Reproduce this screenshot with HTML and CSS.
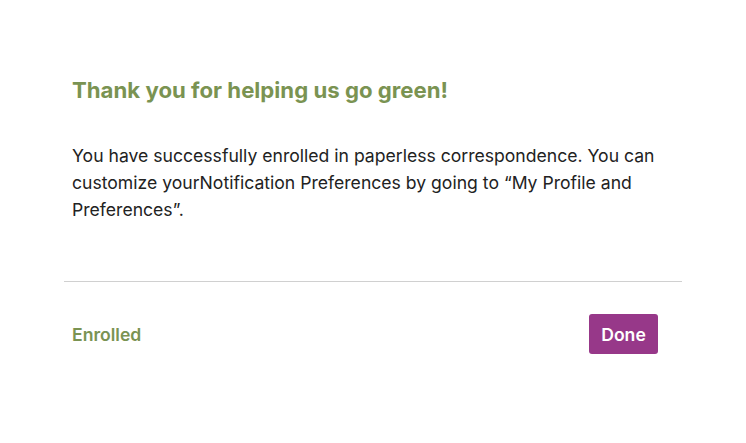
FILE: index.html
```html
<!DOCTYPE html>
<html lang="en">
<head>
<meta charset="utf-8">
<title>Paperless enrollment</title>
<link rel="stylesheet" href="styles.css">
</head>
<body>
<div class="modal">
  <div class="modal-body">
    <h2 class="title">Thank you for helping us go green!</h2>
    <p class="message">You have successfully enrolled in paperless correspondence. You can customize yourNotification Preferences by going to “My Profile and Preferences”.</p>
  </div>
  <div class="modal-footer">
    <span class="status">Enrolled</span>
    <button class="btn-done" type="button">Done</button>
  </div>
</div>
</body>
</html>
```

FILE: styles.css
```css
html, body {
  margin: 0;
  padding: 0;
  background: #ffffff;
}
body {
  font-family: "Inter", "Liberation Sans", sans-serif;
  color: #222222;
}
.modal {
  width: 618px;
  margin-left: 64px;
  padding-top: 76px;
}
.modal-body {
  padding: 0 8px;
  border-bottom: 1px solid #d0d0d0;
  padding-bottom: 58px;
}
.title {
  margin: 0;
  font-size: 22.2px;
  line-height: 28px;
  font-weight: 700;
  color: #7a9352;
}
.message {
  margin: 38px 0 0;
  font-size: 17.6px;
  line-height: 27px;
  font-weight: 400;
  color: #222222;
  width: 600px;
}
.modal-footer {
  display: flex;
  justify-content: space-between;
  align-items: center;
  padding: 32px 24px 0 8px;
}
.status {
  font-size: 17.6px;
  font-weight: 600;
  color: #7a9352;
}
.btn-done {
  font-family: inherit;
  background: #973889;
  color: #ffffff;
  border: none;
  border-radius: 3px;
  font-size: 17.6px;
  font-weight: 600;
  height: 40px;
  width: 69px;
  padding: 0;
}
```
